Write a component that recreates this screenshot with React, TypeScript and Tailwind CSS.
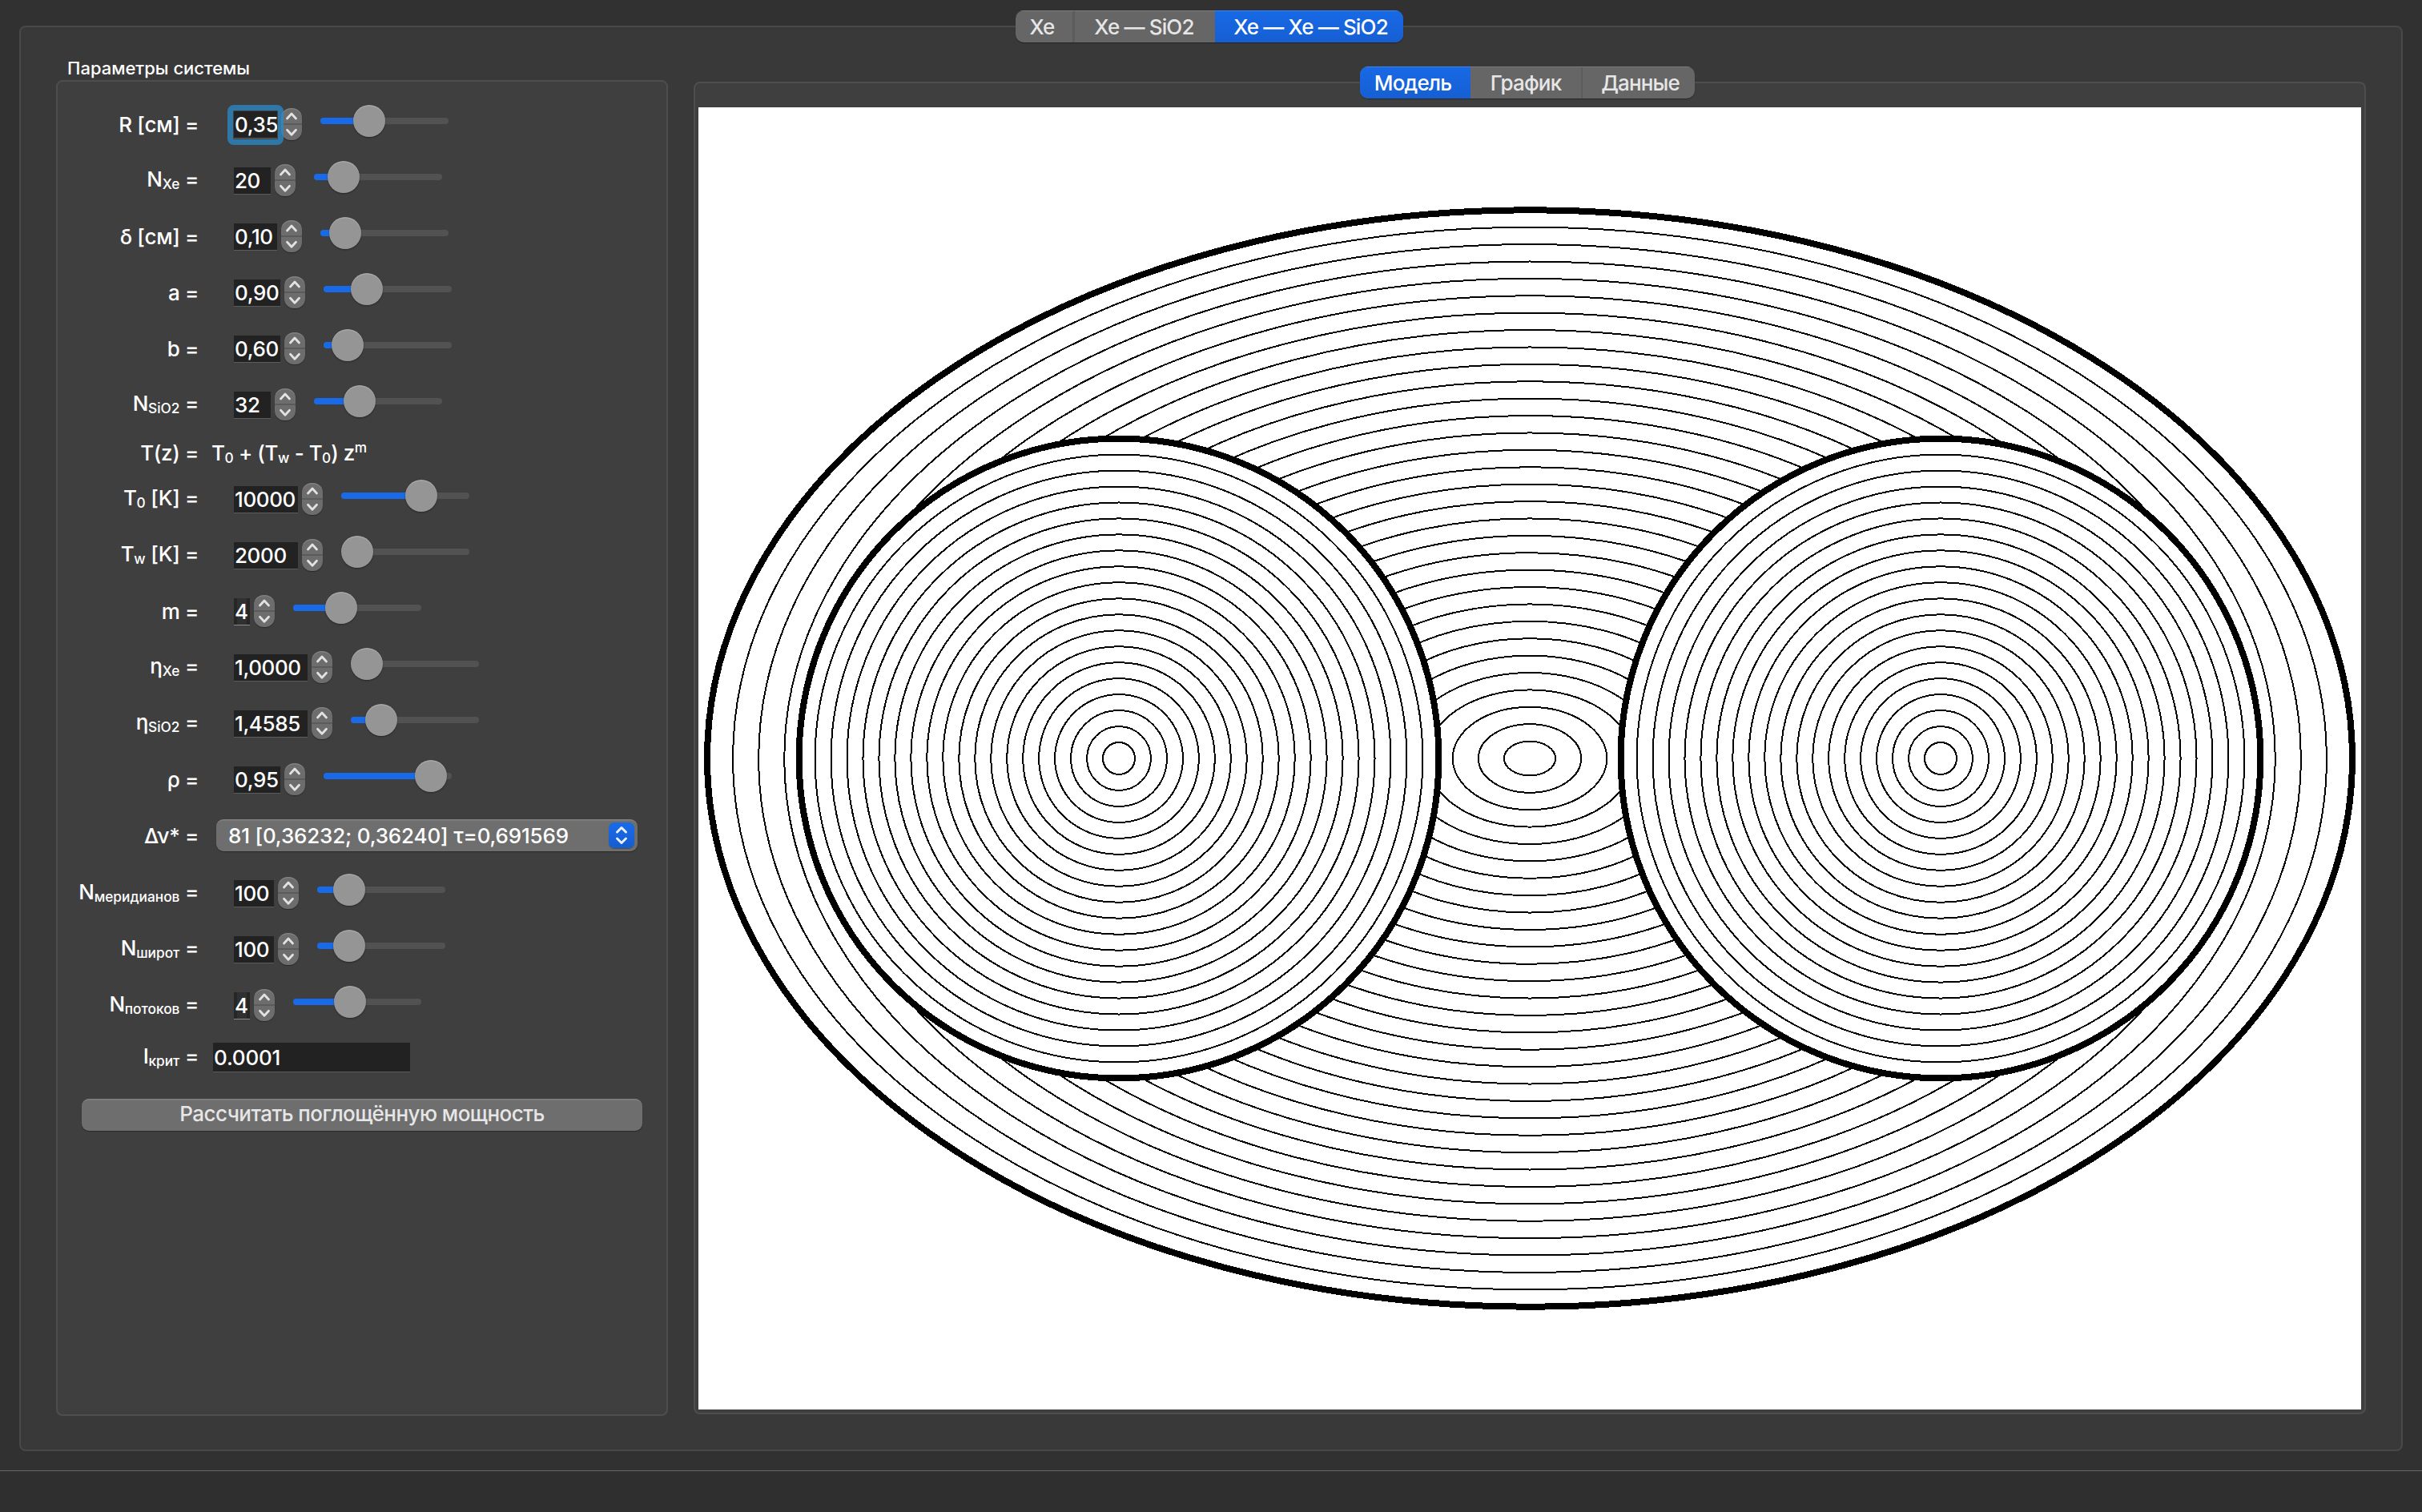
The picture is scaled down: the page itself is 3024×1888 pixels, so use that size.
import type { ReactNode } from "react";

const Sub = ({ children }: { children: ReactNode }) => (
  <span className="relative top-[3px] text-[17.3px] leading-none tracking-[0px]">{children}</span>
);

const Chevrons = () => (
  <svg viewBox="0 0 26 40" className="block h-10 w-[26px]" fill="none" stroke="#e2e2e2" strokeWidth="2.8" strokeLinecap="round" strokeLinejoin="round">
    <path d="M0 20H26" stroke="#5b5b5b" strokeWidth="2" strokeLinecap="butt" />
    <path d="M7.5 13L13 7L18.5 13" />
    <path d="M7.5 27.2L13 33.2L18.5 27.2" />
  </svg>
);

function Stepper() {
  return (
    <div className="h-10 w-[26px] shrink-0 overflow-hidden rounded-[12px] bg-[#6d6d6d] shadow-[0_1px_1px_rgba(0,0,0,0.35),inset_0_2px_0_-0.5px_rgba(255,255,255,0.14)]">
      <Chevrons />
    </div>
  );
}

function Slider({ fill }: { fill: number }) {
  return (
    <div className="relative -top-1 flex h-10 w-40 shrink-0 items-center">
      <div className="h-2 w-full overflow-hidden rounded-full bg-[#525252]">
        <div className="h-full bg-[#186ae8]" style={{ width: fill > 0 ? fill + 20 : 0 }} />
      </div>
      <div
        className="absolute top-0 size-10 rounded-full bg-[#959595] shadow-[0_1px_2px_rgba(0,0,0,0.4),inset_0_1.5px_0_rgba(255,255,255,0.18)]"
        style={{ left: fill }}
      />
    </div>
  );
}

type Param = {
  label: ReactNode;
  sub?: boolean;
  value: string;
  width: number;
  fill: number;
  focused?: boolean;
  tiny?: boolean;
};

function Label({ children, sub }: { children: ReactNode; sub?: boolean }) {
  return (
    <div className={`w-44 shrink-0 text-right tracking-[-0.35px] ${sub ? "relative -top-[1.5px]" : "pt-px"}`}>{children}</div>
  );
}

function Field({ value, width, focused, tiny }: { value: string; width: number; focused?: boolean; tiny?: boolean }) {
  return (
    <div
      className={`relative mt-px h-[34px] shrink-0 border-b ${
        tiny ? "border-[#8a8a8a] bg-[#303030] shadow-[inset_4px_0_0_#262626,inset_-4px_0_0_#262626]" : "border-[#5c5c5c] bg-[#222222]"
      }`}
      style={{ width }}
    >
      <div className="h-full overflow-hidden pl-px leading-[33px] tracking-[-0.4px] whitespace-nowrap">{value}</div>
      {focused && <div className="absolute -inset-x-2 -top-2 -bottom-[9px] z-10 rounded-[8px] border-[7px] border-[#2b8bcb]/75" />}
    </div>
  );
}

function ParamRow({ p }: { p: Param }) {
  return (
    <div className="flex h-[70px] items-center">
      <Label sub={p.sub}>{p.label}</Label>
      <div className="ml-11 flex items-center">
        <Field value={p.value} width={p.width} focused={p.focused} tiny={p.tiny} />
        <div className="ml-[5px]">
          <Stepper />
        </div>
        <div className="ml-[23px]">
          <Slider fill={p.fill} />
        </div>
      </div>
    </div>
  );
}

const geometry: Param[] = [
  { label: "R [см] =", value: "0,35", width: 54, fill: 41, focused: true },
  { label: <>N<Sub>Xe</Sub> =</>, sub: true, value: "20", width: 46, fill: 17 },
  { label: "δ [см] =", value: "0,10", width: 54, fill: 11 },
  { label: "a =", value: "0,90", width: 58, fill: 34 },
  { label: "b =", value: "0,60", width: 58, fill: 10 },
  { label: <>N<Sub>SiO2</Sub> =</>, sub: true, value: "32", width: 46, fill: 37 },
];

const physics: Param[] = [
  { label: <>T<Sub>0</Sub> [K] =</>, sub: true, value: "10000", width: 80, fill: 80 },
  { label: <>T<Sub>w</Sub> [K] =</>, sub: true, value: "2000", width: 80, fill: 0 },
  { label: "m =", value: "4", width: 20, fill: 40, tiny: true },
  { label: <>η<Sub>Xe</Sub> =</>, sub: true, value: "1,0000", width: 92, fill: 0 },
  { label: <>η<Sub>SiO2</Sub> =</>, sub: true, value: "1,4585", width: 92, fill: 18 },
  { label: "ρ =", value: "0,95", width: 58, fill: 114 },
];

const mesh: Param[] = [
  { label: <>N<Sub>меридианов</Sub> =</>, sub: true, value: "100", width: 50, fill: 20 },
  { label: <>N<Sub>широт</Sub> =</>, sub: true, value: "100", width: 50, fill: 20 },
  { label: <>N<Sub>потоков</Sub> =</>, sub: true, value: "4", width: 20, fill: 51, tiny: true },
];

function Tabs({ items, active }: { items: { text: string; w: string }[]; active: number }) {
  return (
    <div className="relative z-10 flex h-10 overflow-hidden rounded-[10px] bg-[#666666] shadow-[0_1px_1px_rgba(0,0,0,0.4)]">
      {items.map((t, i) => (
        <div
          key={t.text}
          className={`flex h-10 items-center justify-center border-t-[1.5px] leading-[39px] tracking-[-0.85px] whitespace-nowrap ${t.w} ${
            i === active
              ? "border-[#3f83ee] bg-linear-to-b from-[#1869e6] to-[#165fd2] text-white"
              : "border-[#7b7b7b] text-[#e6e6e6]"
          } ${i > 0 && i !== active && i - 1 !== active ? "shadow-[inset_2px_0_0_#5c5c5c]" : ""} ${
            i === 0 && active === 2 ? "shadow-[inset_-1px_0_0_#5c5c5c]" : ""
          }`}
        >
          {t.text}
        </div>
      ))}
    </div>
  );
}

const A = 1027;
const B = 684.7;
const R = 399.4;
const DX = 513;
const LAYERS = 32;
const RINGS = 20;

function Lamp({ cx }: { cx: number }) {
  return (
    <g>
      <circle cx={cx} cy={813} r={R} fill="#fff" strokeWidth="8" />
      {Array.from({ length: RINGS - 1 }, (_, i) => (
        <circle key={i} cx={cx} cy={813} r={(R * (i + 1)) / RINGS} strokeWidth="2" />
      ))}
    </g>
  );
}

function Model() {
  return (
    <svg viewBox="0 0 2076 1626" className="block h-[1626px] w-[2076px] bg-white" fill="none" stroke="#000" shapeRendering="crispEdges">
      {Array.from({ length: LAYERS - 1 }, (_, i) => (
        <ellipse key={i} cx={1038} cy={813} rx={(A * (i + 1)) / LAYERS} ry={(B * (i + 1)) / LAYERS} strokeWidth="2" />
      ))}
      <ellipse cx={1038} cy={813} rx={A} ry={B} strokeWidth="8" />
      <Lamp cx={1038 - DX} />
      <Lamp cx={1038 + DX} />
    </svg>
  );
}

export default function App() {
  return (
    <div className="flex h-[1888px] w-[3024px] flex-col overflow-hidden bg-[#313131] pt-[13px] font-['Inter','Noto_Sans',sans-serif] text-[26px] leading-10 font-[450] text-white">
      <div className="flex pl-[1268px]">
        <Tabs
          active={2}
          items={[
            { text: "Xe", w: "w-[72px] pr-[6px]" },
            { text: "Xe — SiO2", w: "w-[177px]" },
            { text: "Xe — Xe — SiO2", w: "w-[235px] pl-1" },
          ]}
        />
      </div>

      <div className="mx-6 -mt-[21px] flex h-[1780px] shrink-0 rounded-[8px] border-2 border-[#484848] bg-[#393939]">
        <div className="ml-11 w-[764px] shrink-0 pt-[34px]">
          <div className="h-8 pl-[14px] text-[22px] leading-[35px]">Параметры системы</div>
          <div className="h-[1668px] rounded-[8px] border-2 border-[#4e4e4e] bg-[#3f3f3f] pt-[18px]">
            {geometry.map((p, i) => (
              <ParamRow key={i} p={p} />
            ))}
            <div className="flex h-12 items-center">
              <div className="flex pt-[2px] tracking-[-0.5px]">
                <Label>T(z) =</Label>
                <div className="ml-4 pt-px">
                  T<Sub>0</Sub> + (T<Sub>w</Sub> - T<Sub>0</Sub>) z<span className="relative -top-[10px] text-[17.3px] leading-none">m</span>
                </div>
              </div>
            </div>
            {physics.map((p, i) => (
              <ParamRow key={i} p={p} />
            ))}
            <div className="flex h-[72px] items-center pb-[2px]">
              <Label>Δν* =</Label>
              <div className="ml-[22px] flex h-10 w-[526px] items-center justify-between rounded-[9px] bg-[#6e6e6e] pr-1 pl-[15px] shadow-[0_1px_1px_rgba(0,0,0,0.35),inset_0_2px_0_-0.5px_rgba(255,255,255,0.14)]">
                <span className="pt-px tracking-[-0.18px]">81 [0,36232; 0,36240] τ=0,691569</span>
                <span className="flex h-8 w-8 items-center justify-center rounded-[7px] bg-linear-to-b from-[#1a6bea] to-[#155dce] shadow-[0_1px_1px_rgba(0,0,0,0.3)]">
                  <svg viewBox="0 0 32 32" className="size-8" fill="none" stroke="#e8effc" strokeWidth="3" strokeLinecap="round" strokeLinejoin="round">
                    <path d="M10.5 12L16 6.5L21.5 12M10.5 20L16 25.5L21.5 20" />
                  </svg>
                </span>
              </div>
            </div>
            {mesh.map((p, i) => (
              <ParamRow key={i} p={p} />
            ))}
            <div className="flex h-[60px] items-center">
              <Label sub>
                I<Sub>крит</Sub> =
              </Label>
              <div className="ml-[18px] h-[37px] w-[246px] border-b border-[#5c5c5c] bg-[#222222] pl-px leading-[38px] tracking-[-0.2px]">0.0001</div>
            </div>
            <div className="mt-[22px] ml-[30px] h-10 w-[700px] rounded-[9px] bg-[#6e6e6e] text-center leading-[38px] tracking-[-0.55px] text-[#e6e6e6] shadow-[0_1px_1px_rgba(0,0,0,0.35),inset_0_2px_0_-0.5px_rgba(255,255,255,0.14)]">
              Рассчитать поглощённую мощность
            </div>
          </div>
        </div>

        <div className="ml-8 w-[2088px] shrink-0 pt-[49px]">
          <div className="flex pl-[832px]">
            <Tabs
              active={0}
              items={[
                { text: "Модель", w: "w-[138px] pr-[6px]" },
                { text: "График", w: "w-[138px]" },
                { text: "Данные", w: "w-[142px] pl-[6px]" },
              ]}
            />
          </div>
          <div className="-mt-[21px] h-[1664px] rounded-[8px] border-2 border-[#4e4e4e] bg-[#3f3f3f] pt-[30px] pl-1">
            <Model />
          </div>
        </div>
      </div>

      <div className="mt-6 h-[52px] shrink-0 border-t border-[#686868] bg-[#2f2f2f]" />
    </div>
  );
}
